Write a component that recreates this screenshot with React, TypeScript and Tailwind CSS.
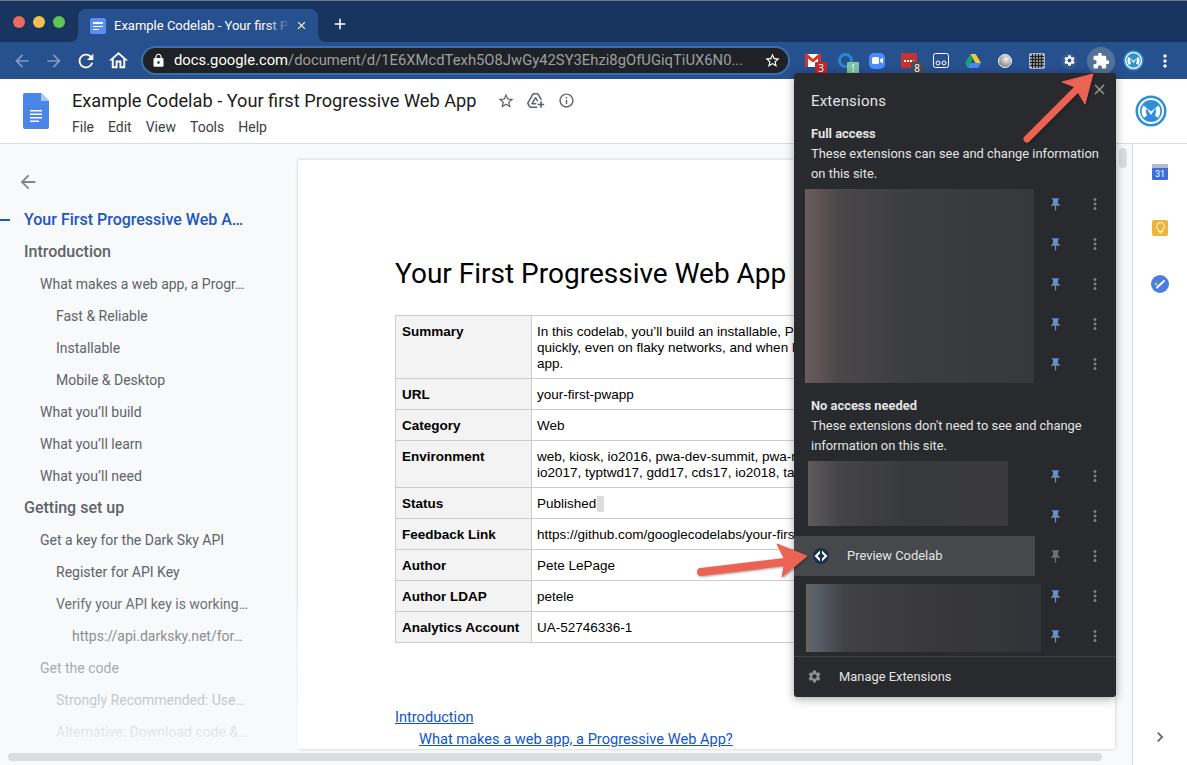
import { MdAdd, MdAddToDrive, MdArrowBack, MdChevronRight, MdClose, MdExtension, MdInfoOutline, MdLock, MdMoreVert, MdOutlineHome, MdPushPin, MdRefresh, MdSettings, MdStarBorder } from "react-icons/md";

const outline = [
  { text: "Your First Progressive Web A…", cls: "pl-6 text-[16px] font-medium text-[#1c56bf]" },
  { text: "Introduction", cls: "pl-6 text-[16px] font-medium text-[#5f6368]" },
  { text: "What makes a web app, a Progr…", cls: "pl-10" },
  { text: "Fast & Reliable", cls: "pl-14" },
  { text: "Installable", cls: "pl-14" },
  { text: "Mobile & Desktop", cls: "pl-14" },
  { text: "What you’ll build", cls: "pl-10" },
  { text: "What you’ll learn", cls: "pl-10" },
  { text: "What you’ll need", cls: "pl-10" },
  { text: "Getting set up", cls: "pl-6 text-[16px] font-medium text-[#5f6368]" },
  { text: "Get a key for the Dark Sky API", cls: "pl-10" },
  { text: "Register for API Key", cls: "pl-14" },
  { text: "Verify your API key is working…", cls: "pl-14" },
  { text: "https://api.darksky.net/for…", cls: "pl-[72px]" },
  { text: "Get the code", cls: "pl-10" },
  { text: "Strongly Recommended: Use…", cls: "pl-14" },
  { text: "Alternative: Download code &…", cls: "pl-14" },
];

const rows = [
  { label: "Summary", h: "h-[63px]", lines: ["In this codelab, you’ll build an installable, Progressive Web App, which loads", "quickly, even on flaky networks, and when launched looks like a native", "app."] },
  { label: "URL", h: "h-[31px]", lines: ["your-first-pwapp"] },
  { label: "Category", h: "h-[31px]", lines: ["Web"] },
  { label: "Environment", h: "h-[47px]", lines: ["web, kiosk, io2016, pwa-dev-summit, pwa-roadshow,", "io2017, typtwd17, gdd17, cds17, io2018, tag-web"] },
  { label: "Status", h: "h-[31px]", lines: ["Published"], mark: true },
  { label: "Feedback Link", h: "h-[31px]", lines: ["https://github.com/googlecodelabs/your-first-pwapp/issues"] },
  { label: "Author", h: "h-[31px]", lines: ["Pete LePage"] },
  { label: "Author LDAP", h: "h-[31px]", lines: ["petele"] },
  { label: "Analytics Account", h: "h-[31px]", lines: ["UA-52746336-1"] },
];

function PinRow({ off }: { off?: boolean }) {
  return (
    <div className="flex h-10 w-[80px] items-center">
      <div className="flex w-10 justify-center">
        <MdPushPin size={15} className={off ? "text-[#6f7074]" : "text-[#6a8cc7]"} />
      </div>
      <div className="flex w-10 justify-center">
        <MdMoreVert size={18} className="text-[#7d7e82]" />
      </div>
    </div>
  );
}

function MuleLogo({ size }: { size: number }) {
  return (
    <svg width={size} height={size} viewBox="0 0 32 32">
      <circle cx="16" cy="16" r="15.5" fill="#2f8fd6" />
      <circle cx="16" cy="16" r="13" fill="#fff" />
      <circle cx="16" cy="16" r="11" fill="#2f8fd6" />
      <path d="M8.5 10.5c-2.6 3.600-2.400 9 .6 12.300l2.900-2.200c-1.300-3.300-1.200-5.600-.4-7.300l4.400 6.700 4.400-6.700c.8 1.700.9 4-.4 7.300l2.900 2.200c3-3.300 3.200-8.700.6-12.300L16 16.500z" fill="#fff" />
    </svg>
  );
}

function DocIcon() {
  return (
    <svg width="26" height="36" viewBox="0 0 26 36">
      <path d="M2 0h16l8 8v26a2 2 0 0 1-2 2H2a2 2 0 0 1-2-2V2a2 2 0 0 1 2-2z" fill="#4a86e8" />
      <path d="M18 0l8 8h-8z" fill="#a6c5fa" />
      <path d="M7 17h12v1.500H7zM7 20.500h12V22H7zM7 24h12v1.500H7zM7 27.500h9V29H7z" fill="#fff" />
    </svg>
  );
}

function Badge({ bg, text }: { bg: string; text: string }) {
  return (
    <span className={`absolute left-[18px] top-[20px] flex h-[12px] w-3 items-center justify-center rounded-[1px] text-[10px] leading-none text-white ${bg}`}>{text}</span>
  );
}

function ToolbarIcons() {
  return (
    <div className="flex items-center">
      {/* gmail */}
      <div className="relative flex h-[37px] w-8 items-center justify-center">
        <svg width="16" height="13" viewBox="0 0 16 13">
          <rect width="16" height="13" fill="#fff" />
          <path d="M0 0h2.500L8 5 13.500 0H16v13h-3V4.500L8 8.500l-5-4V13H0z" fill="#d8322c" />
        </svg>
        <Badge bg="bg-[#c4272b]" text="3" />
      </div>
      {/* blue ring */}
      <div className="relative flex h-[37px] w-8 items-center justify-center">
        <div className="size-[15px] rounded-full border-[3px] border-[#2a88c9]" />
        <Badge bg="bg-[#7cc4a3]" text="!" />
      </div>
      {/* zoom */}
      <div className="flex h-[37px] w-8 items-center justify-center">
        <div className="flex size-4 items-center justify-center rounded-[5px] bg-[#4a8cff]">
          <svg width="11" height="7" viewBox="0 0 11 7"><rect width="7" height="7" rx="1.500" fill="#fff" /><path d="M8 2.500L11 .5v6L8 4.500z" fill="#fff" /></svg>
        </div>
      </div>
      {/* red dots */}
      <div className="relative flex h-[37px] w-8 items-center justify-center">
        <div className="flex h-[15px] w-4 items-center justify-center gap-[1px] rounded-[1px] bg-[#c5332f]">
          <div className="size-[2px] bg-white" />
          <div className="size-[2px] bg-white" />
          <div className="size-[2px] bg-white" />
          <div className="size-[1px] bg-white" />
        </div>
        <Badge bg="bg-[#4b4d50]" text="8" />
      </div>
      {/* tape */}
      <div className="flex h-[37px] w-8 items-center justify-center">
        <svg width="16" height="15" viewBox="0 0 16 15">
          <rect x=".5" y=".5" width="15" height="14" rx="2" fill="#27508f" stroke="#fff" />
          <circle cx="5" cy="10" r="2" fill="none" stroke="#fff" />
          <circle cx="11" cy="10" r="2" fill="none" stroke="#fff" />
        </svg>
      </div>
      {/* drive */}
      <div className="flex h-[37px] w-8 items-center justify-center">
        <svg width="16" height="14" viewBox="0 0 16 14">
          <path d="M5.300 0h5.400l5.300 9h-5.400z" fill="#f7c635" />
          <path d="M5.300 0L0 9.200l2.700 4.800 5.300-9.300z" fill="#1ea362" />
          <path d="M2.700 14h10.600l2.700-5H5.400z" fill="#4688f4" />
        </svg>
      </div>
      {/* grey ball */}
      <div className="flex h-[37px] w-8 items-center justify-center">
        <div className="size-[14px] rounded-full border border-white bg-[radial-gradient(circle_at_60%_35%,#f4f4f4,#8a8a8a_70%)]" />
      </div>
      {/* grid */}
      <div className="flex h-[37px] w-8 items-center justify-center">
        <svg width="16" height="16" viewBox="0 0 16 16">
          <rect x=".5" y=".5" width="15" height="15" rx="1" fill="#d8dce4" stroke="#9fb2cf" />
          <path d="M3.500 1v14M6.500 1v14M9.500 1v14M12.500 1v14M1 3.500h14M1 6.500h14M1 9.500h14M1 12.500h14" stroke="#222" strokeWidth="1.500" />
        </svg>
      </div>
      {/* gear */}
      <div className="flex h-[37px] w-8 items-center justify-center">
        <div className="flex size-4 items-center justify-center rounded-full bg-[#375b8f]">
          <MdSettings size={13} className="text-white" />
        </div>
      </div>
      {/* extensions */}
      <div className="flex h-[37px] w-8 items-center justify-center">
        <div className="flex size-7 shrink-0 items-center justify-center rounded-full bg-[#527299]">
          <MdExtension size={18} className="text-white" />
        </div>
      </div>
      <div className="flex h-[37px] w-8 items-center justify-center">
        <MuleLogo size={21} />
      </div>
      <div className="flex h-[37px] w-8 items-center justify-center">
        <MdMoreVert size={20} className="text-white" />
      </div>
    </div>
  );
}

function ExtensionsPopup() {
  return (
    <div className="absolute left-[794px] top-[73px] h-[624px] w-[322px] rounded-[3px] bg-[#292a2d] font-['Roboto',sans-serif] text-[12.9px] leading-5 text-[#e3e4e6] shadow-[0_2px_10px_rgba(0,0,0,0.35)]">
      <div className="px-[17px] pb-[9px] pt-[18px] text-[15px] leading-5 tracking-[0.2px]">Extensions</div>
      <MdClose size={17} className="absolute right-[8px] top-[8px] text-[#9a9b9e]" />
      <div className="whitespace-nowrap px-[17px] pt-[4px]">
        <div className="font-bold">Full access</div>
        <div>These extensions can see and change information</div>
        <div>on this site.</div>
      </div>
      <div className="flex h-[200px]">
        <div className="w-[241px] shrink-0 pl-[11px] pt-[5px]">
          <div className="h-[194px] w-[229px] bg-[linear-gradient(90deg,#6b5c5e_0%,#4a4749_15%,#3c3d40_45%,#37383b_100%)]" />
        </div>
        <div className="flex w-[80px] flex-col">
          {[0, 1, 2, 3, 4].map((i) => <PinRow key={i} />)}
        </div>
      </div>
      <div className="whitespace-nowrap px-[17px] pt-[12px]">
        <div className="font-bold">No access needed</div>
        <div>These extensions don't need to see and change</div>
        <div>information on this site.</div>
      </div>
      <div className="flex">
        <div className="w-[241px] shrink-0">
          <div className="ml-[14px] mt-[5px] h-[65px] w-[200px] bg-[linear-gradient(90deg,#5f5b5d_0%,#454548_15%,#38393c_50%,#3a3a3d_100%)]" />
          <div className="mt-[10px] flex h-10 w-[241px] items-center bg-[#47484b]">
            <svg className="ml-[19px]" width="16" height="16" viewBox="0 0 16 16">
              <circle cx="8" cy="8" r="8" fill="#17324a" />
              <path d="M7 2.500L1.500 8 7 13.500V10.500L4.500 8 7 5.500zM9 2.500L14.500 8 9 13.500V10.500L11.500 8 9 5.500z" fill="#fff" />
            </svg>
            <span className="ml-[18px]">Preview Codelab</span>
          </div>
          <div className="ml-[12px] mt-[8px] h-[68px] w-[235px] bg-[linear-gradient(90deg,#6a6264_0%,#5a6068_4%,#424246_16%,#39393c_50%,#323338_100%)]" />
        </div>
        <div className="relative flex w-[80px] flex-col">
          <PinRow />
          <PinRow />
          <PinRow off />
          <PinRow />
          <PinRow />
        </div>
      </div>
      <div className="flex h-[40px] items-center border-t border-[#3f4043]">
        <MdSettings size={15} className="ml-[13px] text-[#8e8f93]" />
        <span className="ml-[17px]">Manage Extensions</span>
      </div>
    </div>
  );
}

export default function App() {
  return (
    <div className="relative flex h-[765px] w-[1187px] flex-col overflow-hidden bg-white">
      {/* tab strip */}
      <div className="flex h-[42px] items-end border-t border-[#6b7a90] bg-[#18355f]">
        <div className="flex h-full items-center gap-2 pl-[13px]">
          <div className="size-3 rounded-full bg-[#ed6a5e]" />
          <div className="size-3 rounded-full bg-[#f5bf4f]" />
          <div className="size-3 rounded-full bg-[#61c554]" />
        </div>
        <div className="relative ml-[13px] flex h-[33px] w-[240px] items-center rounded-t-[8px] bg-[#27508f] pl-[12px] font-['Roboto',sans-serif] text-[13px] text-white">
          <div className="absolute -left-2 bottom-0 size-2 bg-[#27508f]">
            <div className="size-full rounded-br-[8px] bg-[#18355f]" />
          </div>
          <div className="absolute -right-2 bottom-0 size-2 bg-[#27508f]">
            <div className="size-full rounded-bl-[8px] bg-[#18355f]" />
          </div>
          <div className="flex size-4 shrink-0 flex-col items-start justify-center gap-[2px] rounded-[2px] bg-[#5a8ff0] pl-[3px]">
            <div className="h-[2px] w-[10px] bg-white" />
            <div className="h-[1px] w-[10px] bg-white" />
            <div className="h-[1px] w-[6px] bg-white" />
          </div>
          <div className="relative ml-[8px] w-[176px] whitespace-nowrap">
            Example Codelab - Your first P
            <div className="absolute inset-y-0 right-0 w-6 bg-gradient-to-r from-transparent to-[#27508f]" />
          </div>
          <MdClose size={13} className="ml-[5px] shrink-0 text-white" />
        </div>
        <MdAdd size={18} className="mb-[9px] ml-[13px] text-white" />
      </div>
      {/* toolbar */}
      <div className="flex h-[37px] items-center bg-[#27508f]">
        <div className="flex w-[141px] items-center pl-[6px]">
          <div className="flex w-8 justify-center"><MdArrowBack size={20} className="text-[#7f9cc7]" /></div>
          <div className="flex w-8 justify-center"><MdArrowBack size={20} className="rotate-180 text-[#7f9cc7]" /></div>
          <div className="flex w-8 justify-center"><MdRefresh size={22} className="text-white" /></div>
          <div className="flex w-8 justify-center"><MdOutlineHome size={23} className="text-white" /></div>
        </div>
        <div className="flex h-[29px] w-[649px] shrink-0 items-center rounded-full border-2 border-[#3a6cb0] bg-[#202124] pl-2 font-['Roboto',sans-serif] text-[14.8px]">
          <MdLock size={15} className="shrink-0 text-white" />
          <span className="ml-2 text-white">docs.google.com</span>
          <span className="whitespace-nowrap text-[#9aa0a6]">/document/d/1E6XMcdTexh5O8JwGy42SY3Ehzi8gOfUGiqTiUX6N0...</span>
          <MdStarBorder size={17} className="ml-auto mr-[7px] shrink-0 text-white" />
        </div>
        <div className="ml-[7px]">
          <ToolbarIcons />
        </div>
      </div>
      {/* docs header */}
      <div className="flex h-[65px] items-center border-b border-[#dadce0] bg-white font-['Roboto',sans-serif]">
        <div className="ml-[23px] mt-[-1px]">
          <DocIcon />
        </div>
        <div className="ml-[23px] mt-[3px]">
          <div className="flex items-center">
            <span className="text-[18.2px] leading-6 text-[#1b1b1b]">Example Codelab - Your first Progressive Web App</span>
            <MdStarBorder size={18} className="ml-[21px] text-[#5f6368]" />
            <MdAddToDrive size={19} className="ml-[11px] text-[#5f6368]" />
            <MdInfoOutline size={17} className="ml-[13px] text-[#5f6368]" />
          </div>
          <div className="mt-[4px] flex gap-[14px] text-[14px] leading-5 text-[#3c4043]">
            <span>File</span><span>Edit</span><span>View</span><span>Tools</span><span>Help</span>
          </div>
        </div>
        <div className="ml-auto mr-[20px]">
          <MuleLogo size={32} />
        </div>
      </div>
      {/* body */}
      <div className="relative flex min-h-0 flex-1 bg-[#f8f9fa]">
        <div className="relative w-[298px] shrink-0 font-['Roboto',sans-serif] text-[14px] text-[#5f6368]">
          <MdArrowBack size={22} className="absolute left-[17px] top-[27px] text-[#80868b]" />
          <div className="absolute left-0 top-[75px] h-[2px] w-[10px] bg-[#1c56bf]" />
          <div className="pt-[60px]">
            {outline.map((o) => (
              <div key={o.text} className={`flex h-8 items-center whitespace-nowrap ${o.cls}`}>{o.text}</div>
            ))}
          </div>
          <div className="absolute inset-x-0 bottom-0 h-[175px] bg-gradient-to-b from-transparent to-[#f8f9fa] to-95%" />
        </div>
        <div className="flex min-w-0 flex-1 flex-col">
          <div className="mt-[16px] h-[589px] w-[817px] overflow-hidden bg-white pl-[97px] pt-[96px] font-['Liberation_Sans',sans-serif] shadow-[0_0_3px_rgba(0,0,0,0.2)]">
            <div className="font-['Roboto',sans-serif] text-[28px] leading-9 text-black">Your First Progressive Web App</div>
            <div className="mt-[23px] w-[700px] border-t border-l border-[#cccccc] text-[13.5px] leading-4 text-black">
              {rows.map((r) => (
                <div key={r.label} className={`flex border-b border-[#cccccc] ${r.h}`}>
                  <div className="w-[136px] shrink-0 border-r border-[#cccccc] bg-[#f3f3f3] px-[6px] pt-[8px] font-bold">{r.label}</div>
                  <div className="whitespace-nowrap px-[5px] pt-[8px]">
                    {r.lines.map((l) => (
                      <div key={l}>
                        {l}
                        {r.mark && <span className="ml-px inline-block h-4 w-[7px] bg-[#dddddd] align-top" />}
                      </div>
                    ))}
                  </div>
                </div>
              ))}
            </div>
            <div className="mt-[63px] font-['Roboto',sans-serif] text-[14.6px] leading-[22px] text-[#1155cc] underline">Introduction</div>
            <div className="pl-6 font-['Roboto',sans-serif] text-[14.6px] leading-[22px] text-[#1155cc] underline">What makes a web app, a Progressive Web App?</div>
          </div>
        </div>
        {/* side rail */}
        <div className="flex w-[55px] shrink-0 flex-col items-center border-l border-[#dadce0] bg-white pt-[20px]">
          <div className="flex h-4 w-4 flex-col overflow-hidden rounded-[1px] bg-[#3f6ed8] text-center font-['Roboto',sans-serif] text-[9px] leading-[12px] text-white">
            <div className="h-[4px] shrink-0 bg-[#b8bcc4]" />
            31
          </div>
          <div className="mt-[40px] flex size-4 items-center justify-center rounded-[2px] bg-[#eeb537]">
            <svg width="9" height="12" viewBox="0 0 9 12"><path d="M4.500.5a4 4 0 0 0-2 7.400V9.500h4V7.900a4 4 0 0 0-2-7.400zM3 11h3" fill="none" stroke="#fff" /></svg>
          </div>
          <div className="mt-[39px] flex size-[18px] items-center justify-center rounded-full bg-[#4a7ee0]">
            <svg width="12" height="12" viewBox="0 0 12 12"><path d="M3 9.500L10 3" stroke="#fff" strokeWidth="2" strokeLinecap="round" /><circle cx="2" cy="6" r="1.300" fill="#f9c32b" /></svg>
          </div>
          <MdChevronRight size={20} className="mb-[18px] mt-auto text-[#5f6368]" />
        </div>
        {/* overlay scrollbars */}
        <div className="absolute bottom-[4px] left-2 h-2 w-[1094px] rounded-full bg-[#dadce0]" />
        <div className="absolute left-[1119px] top-[4px] h-5 w-2 rounded-full bg-[#dadce0]" />
      </div>

      <ExtensionsPopup />

      {/* annotation arrows */}
      <svg className="pointer-events-none absolute inset-0" width="1187" height="765" viewBox="0 0 1187 765">
        <g fill="#ec6354" stroke="#ec6354" strokeLinejoin="round" className="drop-shadow-[1px_1px_1px_rgba(0,0,0,0.35)]">
          <path d="M1027 139L1078 88" strokeWidth="7" strokeLinecap="round" />
          <path d="M1093 74L1062 82L1075 87L1085 104z" strokeWidth="1" />
          <path d="M701 572L785 562" strokeWidth="8" strokeLinecap="round" />
          <path d="M807 556L777 544L785 560L782 577z" strokeWidth="1" />
        </g>
      </svg>
    </div>
  );
}
